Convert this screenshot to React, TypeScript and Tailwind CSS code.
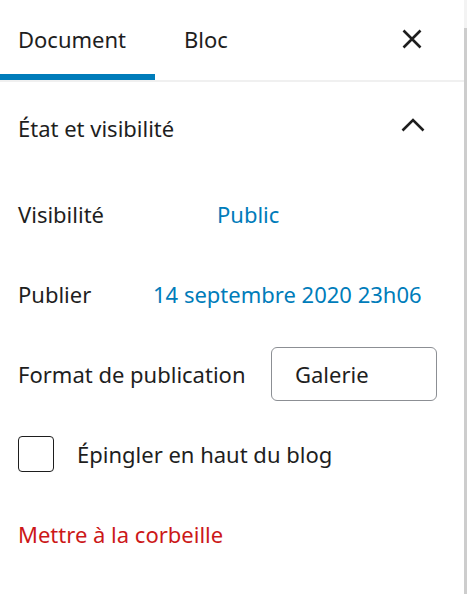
import type { FC } from 'react'

const CloseIcon: FC = () => (
  <svg width="24" height="24" viewBox="0 0 24 24" fill="none" stroke="#1e1e1e" strokeWidth={2.6}>
    <path d="M3.5 3.5l17 17M20.5 3.5l-17 17" />
  </svg>
)

const ChevronUp: FC = () => (
  <svg width="26" height="16" viewBox="0 0 26 16" fill="none" stroke="#1e1e1e" strokeWidth={2.6}>
    <path d="M2.5 13.5L13 3l10.5 10.5" />
  </svg>
)

const App: FC = () => {
  return (
    <div
      className="flex h-[594px] w-[467px] bg-white text-[22px] leading-[1.3] text-[#1e1e1e]"
      style={{ fontFamily: '"Noto Sans", "Open Sans", sans-serif' }}
    >
      <div className="flex min-w-0 flex-1 flex-col">
        {/* tabs */}
        <div className="flex h-[82px] items-stretch border-b-2 border-[#f0f0f0]">
          <button
            type="button"
            className="flex w-[155px] items-center pl-[18px] pb-[2px] shadow-[inset_0_-6px_0_#007cba]"
          >
            Document
          </button>
          <button type="button" className="flex items-center pl-[29px] pb-[2px]">
            Bloc
          </button>
          <button
            type="button"
            className="ml-auto mr-[40px] flex items-center pb-[2px]"
            aria-label="Fermer"
          >
            <CloseIcon />
          </button>
        </div>

        {/* panel */}
        <div className="flex h-[92px] items-center justify-between pl-[18px] pr-[38px]">
          <span>État et visibilité</span>
          <span className="mb-[6px]">
            <ChevronUp />
          </span>
        </div>

        <div className="flex h-[80px] items-center pl-[18px]">
          <span className="w-[199px]">Visibilité</span>
          <span className="text-[#007cba]">Public</span>
        </div>

        <div className="flex h-[80px] items-center pl-[18px]">
          <span className="w-[135px]">Publier</span>
          <span className="whitespace-nowrap text-[#007cba]">14 septembre 2020 23h06</span>
        </div>

        <div className="flex h-[80px] items-center pl-[18px]">
          <span className="w-[253px] whitespace-nowrap">Format de publication</span>
          <div className="flex h-[54px] w-[166px] items-center rounded-[6px] border border-[#8c8f94] pl-[23px]">
            Galerie
          </div>
        </div>

        <div className="flex h-[80px] items-center pl-[18px]">
          <span className="size-[36px] rounded-[4px] border-[1.5px] border-[#1e1e1e]" />
          <span className="ml-[23px]">Épingler en haut du blog</span>
        </div>

        <div className="flex h-[80px] items-center pl-[18px] text-[#cc1818]">
          Mettre à la corbeille
        </div>
      </div>

      {/* scrollbar */}
      <div className="flex w-[3px] flex-col">
        <div className="h-[28px] bg-[#f3f3f3]" />
        <div className="flex-1 bg-[#cdcdcd]" />
      </div>
    </div>
  )
}

export default App
